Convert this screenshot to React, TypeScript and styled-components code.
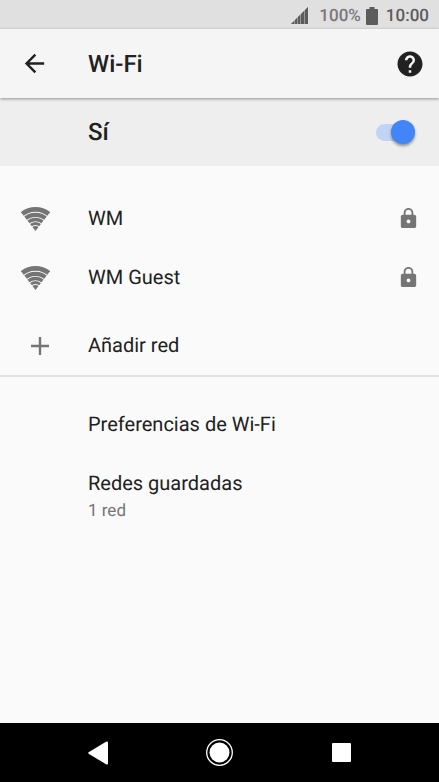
import React, { useState } from "react";
import styled, { createGlobalStyle } from "styled-components";

const GlobalStyle = createGlobalStyle`
  *, *::before, *::after { box-sizing: border-box; }
  body {
    margin: 0;
    background: #fafafa;
    color: #212121;
    font-family: Roboto, "Liberation Sans", sans-serif;
    text-rendering: geometricPrecision;
  }
  button { border: 0; padding: 0; background: none; color: inherit; font: inherit; text-rendering: inherit; cursor: pointer; }
  svg { display: block; }
`;

const Screen = styled.div`
  display: flex;
  flex-direction: column;
  min-height: 100vh;
`;

const StatusBar = styled.div`
  display: flex;
  align-items: center;
  justify-content: flex-end;
  height: 29px;
  padding: 2px 10px 0 0;
  background: #e0e0e0;
  color: #5c5c5c;
  font-size: 17px;
  line-height: 20px;
`;

const Battery = styled.span`
  display: flex;
  align-items: center;
  gap: 5px;
  margin: 0 8px 0 11px;
  color: #787878;
  font-weight: 500;
  svg { color: #5c5c5c; }
`;

const Clock = styled.span`
  font-weight: 500;
`;

const Toolbar = styled.header`
  position: relative;
  display: grid;
  grid-template-columns: 68px 1fr auto;
  align-items: center;
  height: 69px;
  padding: 0 14px 0 20px;
  background: #f5f5f5;
  box-shadow: 0 1px 3px rgba(0, 0, 0, 0.4);
`;

const Title = styled.h1`
  margin: 0;
  font-size: 24px;
  font-weight: 500;
  line-height: 28px;
`;

const SwitchBar = styled.label`
  display: flex;
  align-items: center;
  justify-content: space-between;
  height: 68px;
  padding: 0 24px 0 88px;
  background: #eeeeee;
  font-size: 24px;
  font-weight: 500;
  line-height: 28px;
`;

const Switch = styled.input`
  appearance: none;
  display: flex;
  align-items: center;
  justify-content: flex-start;
  width: 39px;
  height: 17px;
  margin: 0;
  border-radius: 9px;
  background: #bdbdbd;
  cursor: pointer;
  &::before {
    content: "";
    flex: none;
    width: 24px;
    height: 24px;
    border-radius: 50%;
    background: #fafafa;
    box-shadow: 0 2px 3px rgba(0, 0, 0, 0.4);
  }
  &:checked { justify-content: flex-end; background: #c1d4f5; }
  &:checked::before { background: #4285f8; }
`;

const Main = styled.main`
  flex: 1;
`;

const List = styled.ul`
  margin: 0;
  padding: 0;
  list-style: none;
`;

const Networks = styled(List)`
  padding: 23px 0 0;
  border-bottom: 2px solid #e2e2e2;
`;

const Preferences = styled(List)`
  padding: 18px 0 0;
`;

const Row = styled.button<{ $tall?: boolean }>`
  display: grid;
  grid-template-columns: 67px 1fr auto;
  align-items: center;
  width: 100%;
  height: ${({ $tall }) => ($tall ? 68 : 59)}px;
  padding: ${({ $tall }) => ($tall ? "10px" : "0")} 19px 0 21px;
  color: #212121;
  font-size: 20px;
  line-height: 24px;
  text-align: left;
`;

const RowLabel = styled.span`
  padding-bottom: 2px;
`;

const IconSlot = styled.span<{ $indent?: boolean }>`
  padding-left: ${({ $indent }) => ($indent ? 4 : 0)}px;
  color: #757575;
`;

const Preference = styled.button`
  display: flex;
  flex-direction: column;
  gap: 6px;
  width: 100%;
  padding: 17px 20px 18px 88px;
  font-size: 20px;
  line-height: 24px;
  text-align: left;
`;

const Summary = styled.span`
  color: #757575;
  font-size: 17px;
  line-height: 20px;
`;

const NavBar = styled.nav`
  display: grid;
  grid-template-columns: repeat(3, 1fr);
  height: 59px;
  padding: 0 8.33%;
  background: #000;
  color: #fff;
`;

const NavButton = styled.button`
  display: flex;
  align-items: center;
  justify-content: center;
`;

const SignalIcon = () => (
  <svg width="17" height="17" viewBox="0 0 17 17" fill="currentColor" aria-hidden="true">
    <path d="M0 17l3-3v3zM4 13l2-2v6H4zM7 10l2-2v9H7zM10 7l3-3v13h-3zM14 3l3-3v17h-3z" />
    <path opacity=".55" d="M0 17L17 0v17z" />
  </svg>
);

const BatteryIcon = () => (
  <svg width="12" height="18" viewBox="0 0 12 18" fill="currentColor" aria-hidden="true">
    <path d="M3.5 0h5v2H11a1 1 0 0 1 1 1v14a1 1 0 0 1-1 1H1a1 1 0 0 1-1-1V3a1 1 0 0 1 1-1h2.5z" />
  </svg>
);

const BackIcon = () => (
  <svg width="29" height="29" viewBox="0 0 24 24" fill="currentColor" aria-hidden="true">
    <path d="M20 11H7.83l5.59-5.59L12 4l-8 8 8 8 1.41-1.41L7.83 13H20z" />
  </svg>
);

const HelpIcon = () => (
  <svg width="30" height="30" viewBox="0 0 24 24" fill="currentColor" aria-hidden="true">
    <path d="M12 2C6.48 2 2 6.48 2 12s4.48 10 10 10 10-4.48 10-10S17.52 2 12 2zm1 17h-2v-2h2v2zm2.07-7.75l-.9.92C13.45 12.9 13 13.5 13 15h-2v-.5c0-1.1.45-2.1 1.17-2.83l1.24-1.26c.37-.36.59-.86.59-1.41 0-1.1-.9-2-2-2s-2 .9-2 2H8c0-2.21 1.79-4 4-4s4 1.79 4 4c0 .88-.36 1.68-.93 2.25z" />
  </svg>
);

const WifiIcon = () => (
  <svg width="29" height="24" viewBox="0 0 29 24" aria-hidden="true">
    <clipPath id="wifi-fan">
      <path d="M14.5 24L0 5.2V0h29v5.2z" />
    </clipPath>
    <g clipPath="url(#wifi-fan)" fill="none" stroke="currentColor">
      <circle cx="14.5" cy="24" r="21.600" strokeWidth="4.700" />
      <circle cx="14.5" cy="24" r="16.200" strokeWidth="4.200" />
      <circle cx="14.5" cy="24" r="11.500" strokeWidth="3.400" />
      <circle cx="14.5" cy="24" r="7.500" strokeWidth="2.800" />
      <circle cx="14.5" cy="24" r="5" fill="currentColor" stroke="none" />
    </g>
  </svg>
);

const LockIcon = () => (
  <svg width="23" height="23" viewBox="0 0 24 24" fill="currentColor" aria-hidden="true">
    <path d="M18 8h-1V6c0-2.76-2.24-5-5-5S7 3.24 7 6v2H6c-1.1 0-2 .9-2 2v10c0 1.1.9 2 2 2h12c1.1 0 2-.9 2-2V10c0-1.1-.9-2-2-2zm-6 9c-1.1 0-2-.9-2-2s.9-2 2-2 2 .9 2 2-.9 2-2 2zm3.1-9H8.9V6c0-1.71 1.39-3.1 3.1-3.1 1.71 0 3.1 1.39 3.1 3.1v2z" />
  </svg>
);

const PlusIcon = () => (
  <svg width="30" height="30" viewBox="0 0 30 30" fill="currentColor" aria-hidden="true">
    <path d="M13.800 6h2.400v7.800H24v2.400h-7.800V24h-2.400v-7.800H6v-2.400h7.800z" />
  </svg>
);

const networks = ["WM", "WM Guest"];

export default function App() {
  const [enabled, setEnabled] = useState(true);

  return (
    <>
      <GlobalStyle />
      <Screen>
        <StatusBar>
          <SignalIcon />
          <Battery>
            100%
            <BatteryIcon />
          </Battery>
          <Clock>10:00</Clock>
        </StatusBar>
        <Toolbar>
          <button type="button" aria-label="Atrás">
            <BackIcon />
          </button>
          <Title>Wi-Fi</Title>
          <button type="button" aria-label="Ayuda">
            <HelpIcon />
          </button>
        </Toolbar>
        <SwitchBar>
          Sí
          <Switch
            type="checkbox"
            role="switch"
            checked={enabled}
            onChange={(event) => setEnabled(event.target.checked)}
          />
        </SwitchBar>
        <Main>
          <Networks>
            {networks.map((name) => (
              <li key={name}>
                <Row type="button">
                  <IconSlot>
                    <WifiIcon />
                  </IconSlot>
                  <RowLabel>{name}</RowLabel>
                  <IconSlot>
                    <LockIcon />
                  </IconSlot>
                </Row>
              </li>
            ))}
            <li>
              <Row type="button" $tall>
                <IconSlot $indent>
                  <PlusIcon />
                </IconSlot>
                <RowLabel>Añadir red</RowLabel>
              </Row>
            </li>
          </Networks>
          <Preferences>
            <li>
              <Preference type="button">Preferencias de Wi-Fi</Preference>
            </li>
            <li>
              <Preference type="button">
                Redes guardadas
                <Summary>1 red</Summary>
              </Preference>
            </li>
          </Preferences>
        </Main>
        <NavBar>
          <NavButton type="button" aria-label="Volver">
            <svg width="20" height="24" viewBox="0 0 20 24" fill="currentColor" aria-hidden="true">
              <path d="M1 11L18 .8q2-1 2 1v20.4q0 2-2 1L1 13q-1.600-1 0-2z" />
            </svg>
          </NavButton>
          <NavButton type="button" aria-label="Inicio">
            <svg width="27" height="27" viewBox="0 0 27 27" aria-hidden="true">
              <circle cx="13.500" cy="13.500" r="12.800" fill="none" stroke="currentColor" strokeWidth="1.300" />
              <circle cx="13.500" cy="13.500" r="10" fill="currentColor" />
            </svg>
          </NavButton>
          <NavButton type="button" aria-label="Recientes">
            <svg width="19" height="19" viewBox="0 0 19 19" fill="currentColor" aria-hidden="true">
              <rect width="19" height="19" rx="1" />
            </svg>
          </NavButton>
        </NavBar>
      </Screen>
    </>
  );
}
